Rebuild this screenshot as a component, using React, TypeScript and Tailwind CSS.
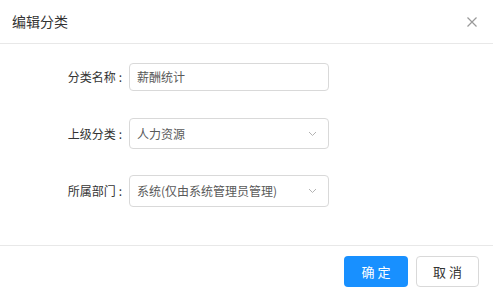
import React from "react";

function Chevron() {
  return (
    <svg width="9" height="6" viewBox="0 0 9 6" className="absolute right-[11px] top-1/2 -translate-y-1/2">
      <path d="M1 1 L4.5 4.5 L8 1" fill="none" stroke="#b3b3b3" strokeWidth="1" />
    </svg>
  );
}

function Row({ label, children, mt }: { label: string; children: React.ReactNode; mt: string }) {
  return (
    <div className={`flex items-center ${mt}`}>
      <div className="w-[129px] text-right pr-[7px] text-[12px] text-[#333]">
        {label}
        <span className="ml-[3px]">:</span>
      </div>
      {children}
    </div>
  );
}

export default function App() {
  const font = { fontFamily: '"Noto Sans CJK SC", "Noto Sans", sans-serif' };
  return (
    <div className="w-[493px] h-[294px] bg-white flex flex-col" style={font}>
      <div className="h-[44px] shrink-0 border-b border-[#e8e8e8] flex items-center justify-between pl-[12px] pr-[16px]">
        <span className="text-[14px] text-[#333]">编辑分类</span>
        <svg width="10" height="10" viewBox="0 0 10 10">
          <path d="M0.5 0.5 L9.5 9.5 M9.5 0.5 L0.5 9.5" stroke="#999" strokeWidth="1.2" />
        </svg>
      </div>
      <div className="flex-1 flex flex-col pt-[19px]">
        <Row label="分类名称" mt="">
          <div className="w-[200px] h-[28px] border border-[#d9d9d9] rounded-[4px] flex items-center pl-[7px] text-[12px] text-[#595959]">
            薪酬统计
          </div>
        </Row>
        <Row label="上级分类" mt="mt-[27px]">
          <div className="relative w-[200px] h-[31px] border border-[#d9d9d9] rounded-[4px] flex items-center pl-[7px] text-[12px] text-[#595959]">
            人力资源
            <Chevron />
          </div>
        </Row>
        <Row label="所属部门" mt="mt-[26px]">
          <div className="relative w-[200px] h-[32px] border border-[#d9d9d9] rounded-[4px] flex items-center pl-[7px] text-[12px] text-[#595959]">
            系统(仅由系统管理员管理)
            <Chevron />
          </div>
        </Row>
      </div>
      <div className="h-[49px] shrink-0 border-t border-[#e8e8e8] flex items-start justify-end gap-[8px] pt-[10px] pr-[14px]">
        <button className="w-[64px] h-[31px] rounded-[4px] bg-[#1890ff] text-white text-[13px] tracking-[3px] pl-[3px]">确定</button>
        <button className="w-[63px] h-[31px] rounded-[4px] border border-[#d9d9d9] bg-white text-[#333] text-[13px] tracking-[3px] pl-[3px]">取消</button>
      </div>
    </div>
  );
}
